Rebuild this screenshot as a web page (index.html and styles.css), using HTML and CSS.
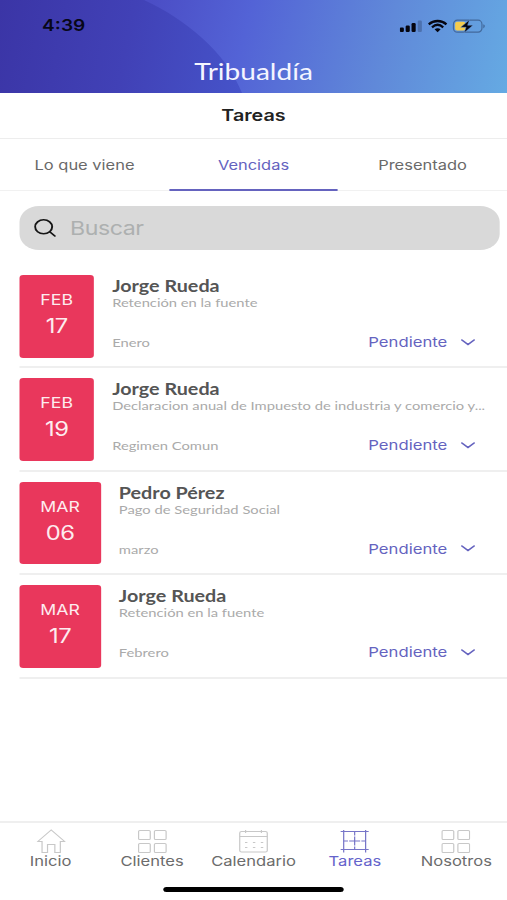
FILE: index.html
```html
<!DOCTYPE html>
<html lang="es">
<head>
<meta charset="utf-8">
<title>Tribualdía</title>
<link rel="stylesheet" href="styles.css">
</head>
<body>
<div class="screen">
  <header class="header">
    <svg class="header-bg" viewBox="0 0 507 93" preserveAspectRatio="none" aria-hidden="true">
      <defs>
        <linearGradient id="base" x1="0" y1="0" x2="260" y2="50" gradientUnits="userSpaceOnUse">
          <stop offset="0" stop-color="#3b35a6"/><stop offset=".5" stop-color="#4141b6"/><stop offset="1" stop-color="#4655cb"/>
        </linearGradient>
        <linearGradient id="wave" x1="150" y1="0" x2="507" y2="93" gradientUnits="userSpaceOnUse">
          <stop offset="0" stop-color="#4b4dc5"/><stop offset=".27" stop-color="#5363d6"/><stop offset=".65" stop-color="#6089d9"/><stop offset="1" stop-color="#65aae3"/>
        </linearGradient>
      </defs>
      <rect width="507" height="93" fill="url(#base)"/>
      <path d="M144 0C185 19 226 52 242 93H507V0Z" fill="url(#wave)"/>
    </svg>
    <div class="status">
      <span class="clock">4:39</span>
      <svg class="status-icons" viewBox="0 0 88 16" preserveAspectRatio="none" aria-hidden="true">
        <rect x="0" y="8.5" width="4.2" height="4.5" rx="1.3"/>
        <rect x="6" y="6.5" width="4.2" height="6.5" rx="1.3"/>
        <rect x="12" y="4" width="4.2" height="9" rx="1.3"/>
        <rect x="18.3" y="1.5" width="4.2" height="11.5" rx="1.3" opacity=".22"/>
        <g fill="none" stroke="#050510" stroke-width="2.3">
          <path d="M29.5 5.3C34.500 .9 42.500 .9 47.500 5.300"/>
          <path d="M32.800 8.300C36.300 5.200 40.700 5.200 44.200 8.300"/>
        </g>
        <path d="M35.400 10.300Q38.500 8.100 41.600 10.300L38.500 13.300Z"/>
        <rect x="54.600" y="1.200" width="29" height="12" rx="4" fill="none" stroke="#314d78" stroke-opacity=".65" stroke-width="1.200"/>
        <rect x="56.300" y="2.800" width="10.500" height="8.800" rx="2" fill="#f5cc4e"/>
        <path d="M85 5.200Q88 6.500 85 9.500Z" fill="#314d78" opacity=".7"/>
        <path d="M71 .8L62 8.300H67.500L65.500 13.800L74.500 6.200H69Z" stroke="#6f9bd8" stroke-width=".5"/>
      </svg>
    </div>
    <h1 class="brand">Tribualdía</h1>
  </header>
  <h2 class="page-title">Tareas</h2>
  <nav class="tabs">
    <a class="tab">Lo que viene</a>
    <a class="tab active">Vencidas</a>
    <a class="tab">Presentado</a>
  </nav>
  <div class="search">
    <svg class="search-icon" viewBox="0 0 18 18" aria-hidden="true"><circle cx="7.800" cy="7.800" r="7"/><path d="M12.800 12.800L17 17"/></svg>
    <span>Buscar</span>
  </div>
  <main class="list">
    <article class="task">
      <div class="date"><span class="month">FEB</span><span class="day">17</span></div>
      <div class="info"><h3>Jorge Rueda</h3><p>Retención en la fuente</p>
        <div class="foot"><span class="period">Enero</span><span class="state">Pendiente<svg viewBox="0 0 12 7"><path d="M1 1L6 5.600L11 1"/></svg></span></div></div>
    </article>
    <article class="task">
      <div class="date"><span class="month">FEB</span><span class="day">19</span></div>
      <div class="info"><h3>Jorge Rueda</h3><p>Declaracion anual de Impuesto de industria y comercio y...</p>
        <div class="foot"><span class="period">Regimen Comun</span><span class="state">Pendiente<svg viewBox="0 0 12 7"><path d="M1 1L6 5.600L11 1"/></svg></span></div></div>
    </article>
    <article class="task">
      <div class="date wide"><span class="month">MAR</span><span class="day">06</span></div>
      <div class="info"><h3>Pedro Pérez</h3><p>Pago de Seguridad Social</p>
        <div class="foot"><span class="period">marzo</span><span class="state">Pendiente<svg viewBox="0 0 12 7"><path d="M1 1L6 5.600L11 1"/></svg></span></div></div>
    </article>
    <article class="task">
      <div class="date wide"><span class="month">MAR</span><span class="day">17</span></div>
      <div class="info"><h3>Jorge Rueda</h3><p>Retención en la fuente</p>
        <div class="foot"><span class="period">Febrero</span><span class="state">Pendiente<svg viewBox="0 0 12 7"><path d="M1 1L6 5.600L11 1"/></svg></span></div></div>
    </article>
  </main>
  <footer class="bottom">
    <nav class="bottom-nav">
      <a class="item"><svg viewBox="0 0 24 24"><path d="M1 12.500L12 1L23 12.500H19.500V23.500H15V15.500H9V23.500H4.500V12.500Z"/></svg><span>Inicio</span></a>
      <a class="item"><svg viewBox="0 0 24 24"><rect x=".7" y="1.500" width="9.600" height="9" rx="1"/><rect x="13.700" y="1.500" width="9.600" height="9" rx="1"/><rect x=".7" y="14.500" width="9.600" height="9" rx="1"/><rect x="13.700" y="14.500" width="9.600" height="9" rx="1"/></svg><span>Clientes</span></a>
      <a class="item"><svg viewBox="0 0 24 24"><rect x=".7" y="2.500" width="22.600" height="20.500" rx="1.500"/><path d="M.7 7.500H23.300M5.500 1V4M18.500 1V4"/><path class="dots" d="M5 13.500H20M5 18.500H20"/></svg><span>Calendario</span></a>
      <a class="item active"><svg viewBox="0 0 24 24"><path d="M.5 2.500H23.500M.5 20.500H23.500M3 1V23.500M21 1V23.500"/><path stroke-dasharray="3.500 1 9 1 3.500 1" d="M3 12H21M12 3V21"/></svg><span>Tareas</span></a>
      <a class="item"><svg viewBox="0 0 24 24"><rect x=".7" y="1.500" width="9.600" height="9" rx="1"/><rect x="13.700" y="1.500" width="9.600" height="9" rx="1"/><rect x=".7" y="14.500" width="9.600" height="9" rx="1"/><rect x="13.700" y="14.500" width="9.600" height="9" rx="1"/></svg><span>Nosotros</span></a>
    </nav>
    <div class="home-bar"></div>
  </footer>
</div>
</body>
</html>
```
FILE: styles.css
```css
* { box-sizing: border-box; }
html, body { margin: 0; width: 507px; height: 900px; overflow: hidden; background: #fff; }
h1, h2, h3, p { margin: 0; }

/* The screen is laid out at 416px and widened to fill the window. */
.screen {
  width: 416px;
  height: 900px;
  display: flex;
  flex-direction: column;
  background: #fff;
  font-family: Inter, "Liberation Sans", sans-serif;
  transform: scaleX(1.21875);
  transform-origin: 0 0;
}

.header { position: relative; height: 93px; flex: none; }
.header-bg { position: absolute; inset: 0; width: 100%; height: 100%; }
.status { position: relative; display: flex; justify-content: space-between; padding: 16px 17px 0 34.500px; height: 54px; }
.clock { font-size: 15.700px; line-height: 20px; font-weight: 600; color: #070718; }
.status-icons { width: 71px; height: 16px; margin-top: 3px; fill: #050510; }
.brand { position: relative; text-align: center; font: 400 23px/34px Lato, sans-serif; color: #f4f5ff; }

.page-title { height: 45.500px; flex: none; text-align: center; font-size: 16.200px; line-height: 45px; font-weight: 600; color: #222; border-bottom: 1px solid #ededed; }

.tabs { display: flex; height: 52.500px; flex: none; border-bottom: 1px solid #f1f1f1; }
.tab { flex: 1; text-align: center; font-size: 13.500px; line-height: 52px; color: #6a6a6a; height: 52.500px; }
.tab.active { color: #6563bf; border-bottom: 2px solid #6563bf; }

.search { display: flex; align-items: center; gap: 11.500px; height: 44px; flex: none; margin: 15px 6px 0 16px; padding-left: 12px; border-radius: 16px; background: #d9d9d9; font-size: 19px; letter-spacing: -.4px; color: #adb0b0; }
.search-icon { width: 18px; height: 18px; fill: none; stroke: #161616; stroke-width: 1.6; stroke-linecap: round; }

.list { flex: 1; margin: 15px 0 0 16px; }
.task { display: flex; height: 103.400px; padding-top: 10px; border-bottom: 2px solid #efefef; font-family: Lato, sans-serif; }
.date { width: 61px; height: 82.500px; border-radius: 3px; background: #e9375c; color: #fdecef; display: flex; flex-direction: column; align-items: center; font-family: Inter, sans-serif; padding-top: 15px; }
.date.wide { width: 66.500px; }
.month { font-size: 14.500px; line-height: 20px; }
.day { font-size: 19.500px; line-height: 32px; letter-spacing: -.5px; }
.info { flex: 1; margin-left: 15px; display: flex; flex-direction: column; padding-top: 1px; }
.info h3 { font-size: 16.200px; line-height: 19px; font-weight: 700; color: #555; }
.info p { font-size: 12.100px; line-height: 15px; color: #aaa; white-space: nowrap; }
.foot { display: flex; justify-content: space-between; align-items: center; margin-top: 22px; padding-right: 26px; height: 20px; }
.period { font-size: 12.100px; color: #aaa; padding-top: 1px; }
.state { display: flex; align-items: center; gap: 11px; font: 400 13.700px/20px Inter, sans-serif; color: #6563bf; }
.state svg { width: 12px; height: 7px; fill: none; stroke: #6563bf; stroke-width: 1.500; stroke-linecap: round; }

.bottom { height: 79.500px; flex: none; border-top: 2px solid #efefef; display: flex; flex-direction: column; align-items: center; }
.bottom-nav { width: 100%; display: flex; height: 64.500px; }
.item { flex: 1; display: flex; flex-direction: column; align-items: center; padding-top: 6px; font-size: 13.600px; line-height: 17px; color: #6c6c6c; }
.item svg { width: 24px; height: 24px; flex: none; fill: none; stroke: #c8c8c8; stroke-width: 1; }
.item .dots { stroke-dasharray: 2 4.500; }
.item.active { color: #6563cb; }
.item.active svg { stroke: #7775c8; }
.home-bar { width: 148px; height: 5px; border-radius: 3px; background: #000; }
```
